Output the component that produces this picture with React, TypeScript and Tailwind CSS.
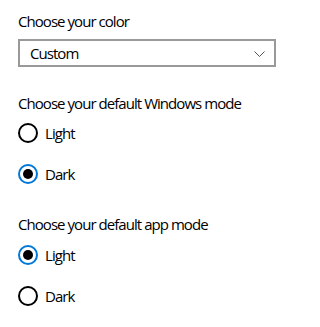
import React, { useState } from 'react';

type RadioProps = {
  label: string;
  checked: boolean;
  onSelect: () => void;
  className?: string;
};

const Radio: React.FC<RadioProps> = ({ label, checked, onSelect, className }) => (
  <button onClick={onSelect} className={`flex items-center h-5 gap-[7px] text-left ${className ?? ''}`}>
    <span
      className={`w-5 h-5 rounded-full border-2 flex items-center justify-center ${
        checked ? 'border-[#0078d7]' : 'border-black'
      }`}
    >
      {checked && <span className="w-[10px] h-[10px] rounded-full bg-black" />}
    </span>
    <span>{label}</span>
  </button>
);

const App: React.FC = () => {
  const [windowsMode, setWindowsMode] = useState<'light' | 'dark'>('dark');
  const [appMode, setAppMode] = useState<'light' | 'dark'>('light');

  return (
    <div className="w-[290px] h-[327px] bg-white text-black font-['Open_Sans',sans-serif] text-[15px] leading-5 tracking-[-0.95px] pl-[18px] pt-[11px] flex flex-col items-start">
      <p>Choose your color</p>
      <div className="mt-[8px] w-[258px] h-[28px] border-2 border-[#999999] flex items-center justify-between pl-[10px] pr-[9px]">
        <span>Custom</span>
        <svg width="11" height="6" viewBox="0 0 11 6" className="mt-px">
          <path d="M0.5 0.5 L5.5 5.5 L10.5 0.5" fill="none" stroke="#555" strokeWidth="1" />
        </svg>
      </div>

      <p className="mt-[26px]">Choose your default Windows mode</p>
      <Radio className="mt-[10px]" label="Light" checked={windowsMode === 'light'} onSelect={() => setWindowsMode('light')} />
      <Radio className="mt-[21px]" label="Dark" checked={windowsMode === 'dark'} onSelect={() => setWindowsMode('dark')} />

      <p className="mt-[30px]">Choose your default app mode</p>
      <Radio className="mt-[11px]" label="Light" checked={appMode === 'light'} onSelect={() => setAppMode('light')} />
      <Radio className="mt-[21px]" label="Dark" checked={appMode === 'dark'} onSelect={() => setAppMode('dark')} />
    </div>
  );
};

export default App;
